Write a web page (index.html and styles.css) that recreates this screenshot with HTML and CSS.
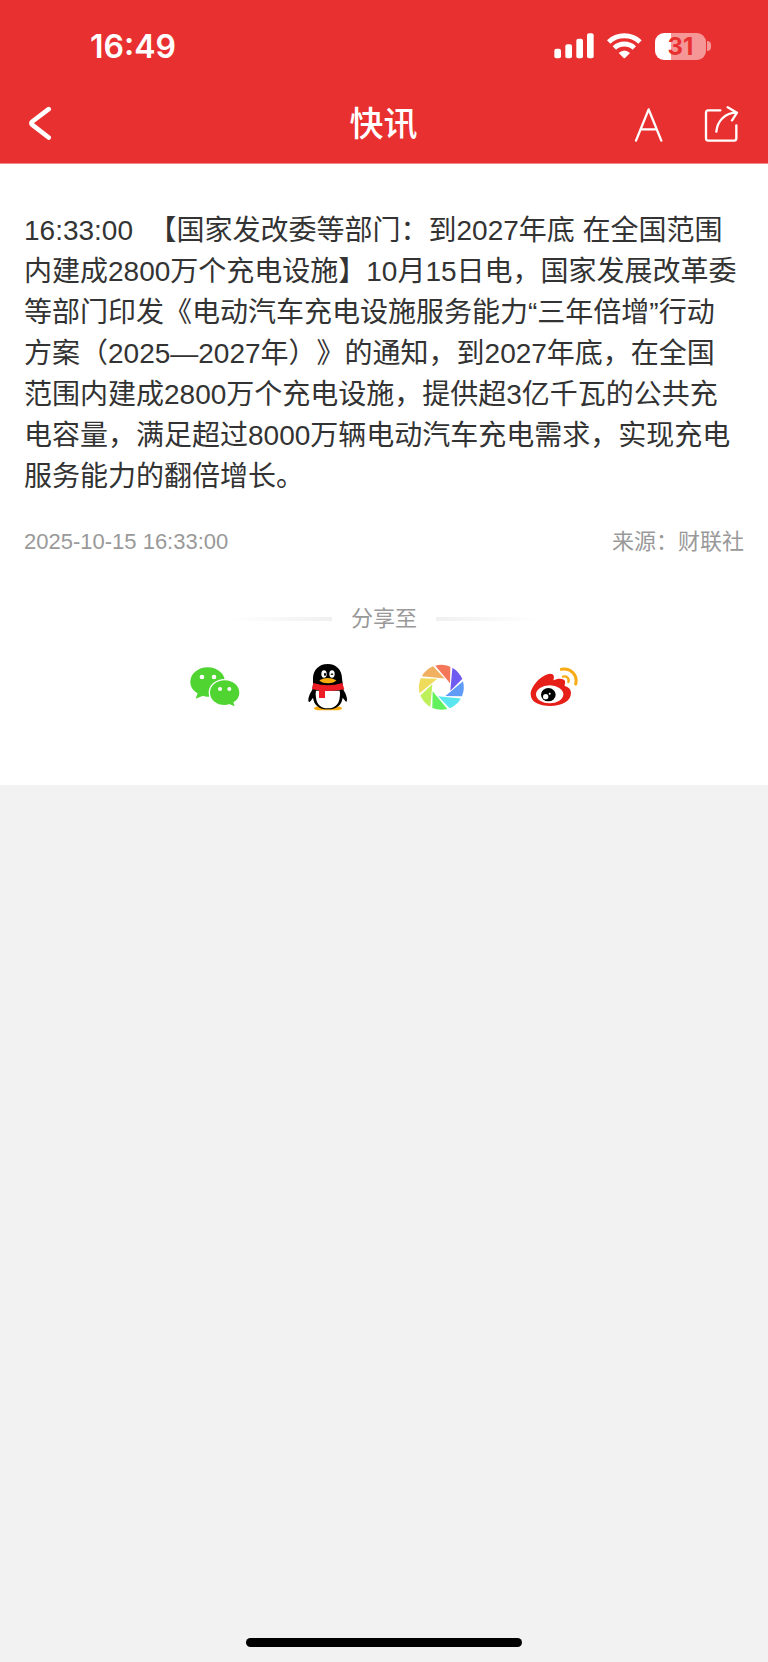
FILE: index.html
```html
<!DOCTYPE html>
<html lang="zh-CN">
<head>
<meta charset="utf-8">
<meta name="viewport" content="width=device-width, initial-scale=1">
<title>快讯</title>
<link rel="stylesheet" href="styles.css">
</head>
<body>
<header class="header">
  <div class="status">
    <time class="status-time">16:49</time>
    <div class="status-icons">
      <svg class="signal" viewBox="506 97 120 78" fill="#fff" aria-hidden="true">
        <rect x="507" y="144" width="20" height="29" rx="6"/><rect x="540" y="131" width="20" height="42" rx="6"/><rect x="573" y="114" width="20" height="59" rx="6"/><rect x="605" y="98" width="20" height="75" rx="6"/>
      </svg>
      <svg class="wifi" viewBox="664 97 105 78" aria-hidden="true">
        <g fill="none" stroke="#fff" stroke-width="15"><path d="M669 124A69 69 0 0 1 763 124"/><path d="M686 142A44.500 44.500 0 0 1 746 142"/></g>
        <path d="M699 157Q716 142 733 157L718 172Q716 174 714 172Z" fill="#fff"/>
      </svg>
      <div class="battery"><span class="battery-level">31</span></div>
    </div>
  </div>
  <nav class="nav">
    <button class="icon-button" type="button" aria-label="返回">
      <svg class="back" viewBox="84 320 72 104" fill="none" stroke="#fff" stroke-width="14" stroke-linecap="round" stroke-linejoin="round"><path d="M146 329L97 366Q91 371 97 376L146 414"/></svg>
    </button>
    <h1 class="title">快讯</h1>
    <div class="actions">
      <button class="icon-button" type="button" aria-label="字体大小">
        <svg class="tool" viewBox="738 318 108 108" fill="none" stroke="#fff" stroke-width="7" stroke-linecap="round" stroke-linejoin="round"><path d="M753 422L791 328L829 422M767 388H815"/></svg>
      </button>
      <button class="icon-button" type="button" aria-label="分享">
        <svg class="tool" viewBox="954 318 108 108" fill="none" stroke="#fff" stroke-width="7" stroke-linecap="round" stroke-linejoin="round"><path d="M1006 331H970Q963 331 963 338V415Q963 422 970 422H1047Q1054 422 1054 415V376"/><path d="M994 395C997 364 1019 338 1056 338M1028 322L1056 338L1041 361"/></svg>
      </button>
    </div>
  </nav>
</header>
<main class="article">
  <p class="content">16:33:00&nbsp;&nbsp;【国家发改委等部门：到2027年底 在全国范围内建成2800万个充电设施】10月15日电，国家发展改革委等部门印发《电动汽车充电设施服务能力“三年倍增”行动方案（2025—2027年）》的通知，到2027年底，在全国范围内建成2800万个充电设施，提供超3亿千瓦的公共充电容量，满足超过8000万辆电动汽车充电需求，实现充电服务能力的翻倍增长。</p>
  <div class="meta"><time>2025-10-15 16:33:00</time><span>来源：财联社</span></div>
  <section class="share">
    <h2 class="share-title">分享至</h2>
    <div class="share-list">
      <button class="icon-button" type="button" aria-label="微信">
        <svg class="brand" viewBox="27 21 150 150">
          <g fill="#4fd432"><path d="M80 37C108 37 132 56 132 81C132 106 108 125 80 125Q73 125 66 122L44 131L50 115C36 107 28 95 28 81C28 56 52 37 80 37Z"/>
          <path stroke="#fff" stroke-width="8" paint-order="stroke" d="M131 76C155 76 175 92 175 113C175 125 169 135 157 142L161 154L145 147Q138 150 131 150C107 150 87 134 87 113C87 92 107 76 131 76Z"/></g>
          <g fill="#fff"><circle cx="63" cy="66" r="7"/><circle cx="99" cy="66" r="7"/><circle cx="117" cy="102" r="6"/><circle cx="145" cy="102" r="6"/></g>
        </svg>
      </button>
      <button class="icon-button" type="button" aria-label="QQ">
        <svg class="brand" viewBox="21 21 150 150">
          <path fill="#faab0d" d="M54 160Q56 154 72 154H120Q136 154 138 160Q138 166 115 166H75Q54 166 54 160Z"/>
          <path d="M95 27C122 27 138 46 138 70L140 85Q140 96 143 106Q153 122 153 135Q153 143 148 138L140 128C137 150 122 163 95 163C69 163 54 150 51 128L44 138Q37 145 37 135Q37 122 49 104Q51 94 51 84V70C51 46 68 27 95 27Z"/>
          <path fill="#fff" d="M60 107H131Q133 114 131 128C129 148 116 160 95 160C75 160 62 148 60 128Q58 114 60 107Z"/>
          <path fill="#ee1c25" d="M52 84Q95 98 139 84L145 103Q121 109 87 108V129H69V106Q57 105 48 102Z"/>
          <ellipse cx="84" cy="57" rx="8" ry="11" fill="#fff"/><ellipse cx="108" cy="57" rx="8" ry="11" fill="#fff"/>
          <ellipse cx="87" cy="58" rx="3" ry="5"/><path fill="none" stroke="#000" stroke-width="3" d="M105 60Q108 51 111 60"/>
          <path fill="#faab0d" d="M70 76Q95 62 121 76Q115 85 96 85Q76 85 70 76Z"/>
        </svg>
      </button>
      <button class="icon-button" type="button" aria-label="朋友圈">
        <svg class="brand" viewBox="30 21 150 150">
          <defs><path id="blade" d="M-18 -65Q4 -71 27 -62L26 -12Z"/></defs>
          <g transform="translate(106 97)">
            <use href="#blade" fill="#f5775a"/><use href="#blade" fill="#6f5bf0" transform="rotate(45)"/><use href="#blade" fill="#5f9bf7" transform="rotate(90)"/><use href="#blade" fill="#5be5ee" transform="rotate(135)"/><use href="#blade" fill="#62f05d" transform="rotate(180)"/><use href="#blade" fill="#bef05c" transform="rotate(225)"/><use href="#blade" fill="#f0dc5c" transform="rotate(270)"/><use href="#blade" fill="#f0b060" transform="rotate(315)"/>
          </g>
        </svg>
      </button>
      <button class="icon-button" type="button" aria-label="微博">
        <svg class="brand" viewBox="24 21 150 150">
          <path fill="#e71f19" d="M29 118C29 94 61 58 88 56C99 56 101 65 97 76C112 68 131 70 132 79C133 84 131 88 131 93C143 96 150 103 150 114C150 138 122 153 88 153C55 153 29 142 29 118Z"/>
          <ellipse cx="86" cy="118" rx="41" ry="27" fill="#fff"/><ellipse cx="82" cy="119" rx="22" ry="20"/>
          <circle cx="74" cy="125" r="8" fill="#fff"/><circle cx="86" cy="116" r="3" fill="#fff"/>
          <g fill="none" stroke="#f9ab15" stroke-width="9" stroke-linecap="round"><path d="M121 43C148 37 171 60 164 87"/><path stroke-width="7" d="M126 65C137 62 146 70 142 81"/></g>
        </svg>
      </button>
    </div>
  </section>
</main>
<footer class="home"><div class="home-bar"></div></footer>
</body>
</html>
```
FILE: styles.css
```css
* {
  box-sizing: border-box;
}

body {
  display: flex;
  flex-direction: column;
  min-height: 100vh;
  margin: 0;
  background: #f2f2f2;
  color: #333;
  font-family: "Liberation Sans", "Noto Sans CJK SC", sans-serif;
  text-spacing-trim: space-all;
}

svg {
  display: block;
}

.icon-button {
  padding: 0;
  border: 0;
  background: none;
  cursor: pointer;
}

.header {
  background: #e93030;
  border-bottom: 1px solid #f08a8a;
  color: #fff;
}

.status {
  display: flex;
  align-items: center;
  justify-content: space-between;
  height: 82px;
  padding: 10px 57px 0 90px;
}

.status-time {
  padding-top: 2px;
  font: 600 32px/40px Inter, sans-serif;
}

.status-icons {
  display: flex;
  align-items: center;
  gap: 13px;
}

.signal {
  width: 40px;
  height: 26px;
}

.wifi {
  width: 35px;
  height: 26px;
}

.battery {
  display: flex;
  align-items: center;
  gap: 1px;
}

.battery-level {
  width: 51px;
  border-radius: 9px;
  background: linear-gradient(90deg, #fff 31%, #f69797 31%);
  color: #e93030;
  font: 700 24px/27px Inter, sans-serif;
  text-align: center;
}

.battery::after {
  content: "";
  width: 4px;
  height: 10px;
  border-radius: 0 5px 5px 0;
  background: #f69797;
}

.nav {
  display: grid;
  grid-template-columns: 1fr auto 1fr;
  align-items: center;
  height: 81px;
  padding: 2px 29px 0 28px;
}

.back {
  width: 24px;
  height: 35px;
}

.title {
  margin: 0;
  font-size: 34px;
  font-weight: 500;
  line-height: 48px;
}

.actions {
  display: flex;
  justify-content: flex-end;
  gap: 36px;
}

.tool {
  width: 36px;
  height: 36px;
}

.article {
  padding: 46px 24px 73px;
  background: #fff;
}

.content {
  margin: 0;
  padding-right: 4px;
  font-size: 28px;
  line-height: 41px;
}

.meta {
  display: flex;
  justify-content: space-between;
  margin-top: 29px;
  color: #999;
  font-size: 22px;
  line-height: 32px;
}

.share {
  margin-top: 45px;
}

.share-title {
  display: flex;
  align-items: center;
  justify-content: center;
  gap: 19px;
  margin: 0;
  color: #999;
  font-size: 22px;
  font-weight: 400;
  line-height: 32px;
}

.share-title::before,
.share-title::after {
  content: "";
  width: 104px;
  height: 4px;
  background: linear-gradient(90deg, #fff, #f0f0f0);
}

.share-title::after {
  background: linear-gradient(90deg, #f0f0f0, #fff);
}

.share-list {
  display: flex;
  justify-content: center;
  gap: 63px;
  margin-top: 27px;
}

.brand {
  width: 50px;
  height: 50px;
}

.home {
  display: flex;
  justify-content: center;
  margin-top: auto;
  padding-bottom: 15px;
}

.home-bar {
  width: 36%;
  height: 9px;
  border-radius: 5px;
  background: #000;
}
```
